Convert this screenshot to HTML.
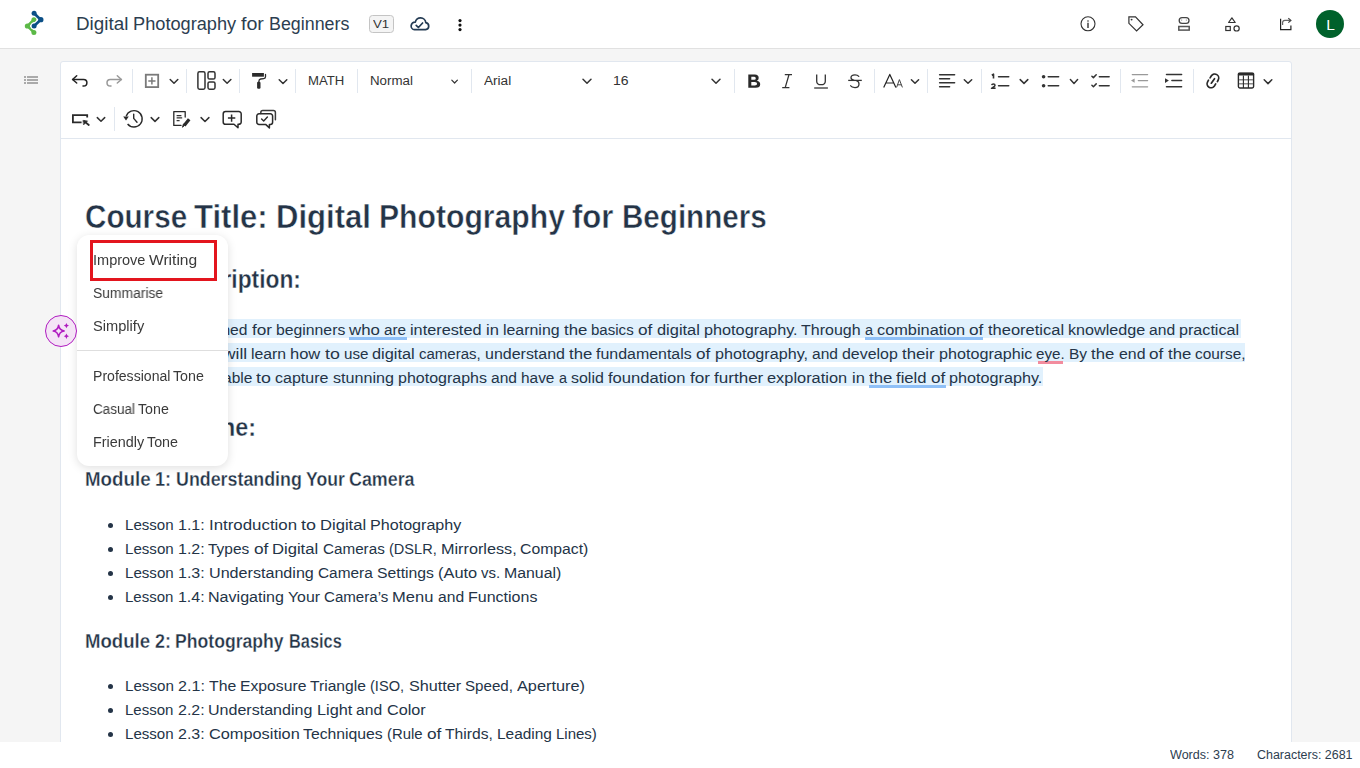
<!DOCTYPE html>
<html><head><meta charset="utf-8">
<style>
html,body{margin:0;padding:0;}
body{width:1360px;height:768px;overflow:hidden;position:relative;background:#f5f5f5;font-family:"Liberation Sans",sans-serif;}
.tx{position:absolute;white-space:pre;transform-origin:0 0;z-index:6;}
.abs{position:absolute;}
#hdr{position:absolute;left:0;top:0;width:1360px;height:48px;background:#fff;border-bottom:1px solid #e1e1e1;}
#editor{position:absolute;left:60px;top:61px;width:1230px;height:700px;background:#fff;border:1px solid #e1e7ef;border-radius:3px 3px 0 0;}
#tbsep{position:absolute;left:61px;top:138px;width:1230px;height:1px;background:#e1e7ef;}
.sep{position:absolute;width:1px;background:#e1e7ef;}
#status{position:absolute;left:0;top:742px;width:1360px;height:26px;background:#fff;}
.hl{position:absolute;background:#e1f1fd;}
.ul{position:absolute;height:3px;background:#8fc0f7;}
#popup{position:absolute;left:77px;top:235px;width:151px;height:231px;background:#fff;border-radius:12px;box-shadow:0 2px 10px rgba(0,0,0,0.13);z-index:20;}
svg{position:absolute;overflow:visible;}
</style></head><body>
<div id="hdr"></div>
<div id="editor"></div>
<div id="tbsep"></div>
<div id="status"></div>

<!-- separators toolbar row 1 -->
<div class="sep" style="left:132px;top:69px;height:24px"></div>
<div class="sep" style="left:186px;top:69px;height:24px"></div>
<div class="sep" style="left:239px;top:69px;height:24px"></div>
<div class="sep" style="left:295px;top:69px;height:24px"></div>
<div class="sep" style="left:357px;top:69px;height:24px"></div>
<div class="sep" style="left:471px;top:69px;height:24px"></div>
<div class="sep" style="left:734px;top:69px;height:24px"></div>
<div class="sep" style="left:874px;top:69px;height:24px"></div>
<div class="sep" style="left:927px;top:69px;height:24px"></div>
<div class="sep" style="left:981px;top:69px;height:24px"></div>
<div class="sep" style="left:1120px;top:69px;height:24px"></div>
<div class="sep" style="left:1193px;top:69px;height:24px"></div>
<!-- row 2 -->
<div class="sep" style="left:114px;top:107px;height:24px"></div>

<!-- highlights -->
<div class="hl" style="left:86px;top:319px;width:1155px;height:19px"></div>
<div class="hl" style="left:86px;top:343px;width:1159px;height:19px"></div>
<div class="hl" style="left:86px;top:367px;width:957px;height:19px"></div>
<div class="ul" style="left:349px;top:337px;width:58px"></div>
<div class="ul" style="left:865px;top:337px;width:118px"></div>
<div class="ul" style="left:869px;top:385px;width:77px"></div>
<div class="ul" style="left:1038px;top:361px;width:25px;background:#f28c9e"></div>

<!-- bullets -->
<div class="abs" style="left:108px;top:523px;width:5px;height:5px;border-radius:50%;background:#243447"></div>
<div class="abs" style="left:108px;top:547px;width:5px;height:5px;border-radius:50%;background:#243447"></div>
<div class="abs" style="left:108px;top:571px;width:5px;height:5px;border-radius:50%;background:#243447"></div>
<div class="abs" style="left:108px;top:595px;width:5px;height:5px;border-radius:50%;background:#243447"></div>
<div class="abs" style="left:108px;top:684px;width:5px;height:5px;border-radius:50%;background:#243447"></div>
<div class="abs" style="left:108px;top:708px;width:5px;height:5px;border-radius:50%;background:#243447"></div>
<div class="abs" style="left:108px;top:732px;width:5px;height:5px;border-radius:50%;background:#243447"></div>

<!-- popup -->
<div id="popup"></div>
<div class="abs" style="left:77px;top:350px;width:151px;height:1px;background:#dedede;z-index:25"></div>
<div class="abs" style="left:90px;top:240px;width:121px;height:35px;border:3px solid #e3151e;z-index:26"></div>

<!-- magic button -->
<div class="abs" style="left:45px;top:315px;width:30px;height:30px;border-radius:50%;border:1.3px solid #b01cc0;background:#f4e4f6;z-index:22"></div>

<svg width="1360" height="768" viewBox="0 0 1360 768" style="left:0;top:0;z-index:5">
<!-- logo -->
<g>
  <polyline points="33.9,19.7 27.6,26 33.9,32.4" fill="none" stroke="#5cb947" stroke-width="2.6" stroke-linejoin="round"/>
  <circle cx="33.9" cy="19.7" r="2.5" fill="#5cb947"/>
  <circle cx="27.4" cy="26" r="2.6" fill="#5cb947"/>
  <circle cx="33.9" cy="32.4" r="2.5" fill="#5cb947"/>
  <line x1="40.7" y1="19.7" x2="34.1" y2="26" stroke="#fff" stroke-width="5"/>
  <circle cx="34.1" cy="26" r="3.6" fill="#fff"/>
  <polyline points="34.1,13.3 40.7,19.7 34.1,26" fill="none" stroke="#0b4f86" stroke-width="2.6" stroke-linejoin="round"/>
  <circle cx="34.1" cy="13.3" r="2.5" fill="#0b4f86"/>
  <circle cx="40.9" cy="19.7" r="2.6" fill="#0b4f86"/>
  <circle cx="34.1" cy="26" r="2.5" fill="#0b4f86"/>
</g>
<!-- V1 badge -->
<rect x="369.5" y="15.5" width="24" height="17" rx="3" fill="#f4f4f4" stroke="#c4c4c4" stroke-width="1"/>
<!-- cloud check -->
<path d="M414.5,29.7 H425.6 A3.6,3.6 0 0 0 425.8,22.6 A5.3,5.3 0 0 0 415.3,22.2 A3.7,3.7 0 0 0 414.5,29.7 Z" fill="none" stroke="#243b53" stroke-width="1.7" stroke-linejoin="round"/>
<polyline points="416.2,25.3 418.4,27.5 422.6,23" fill="none" stroke="#243b53" stroke-width="1.7" stroke-linecap="round" stroke-linejoin="round"/>
<!-- kebab -->
<circle cx="460" cy="20.6" r="1.6" fill="#111"/>
<circle cx="460" cy="25.1" r="1.6" fill="#111"/>
<circle cx="460" cy="29.6" r="1.6" fill="#111"/>
<!-- info -->
<circle cx="1088" cy="23.8" r="7" fill="none" stroke="#333" stroke-width="1.1"/>
<circle cx="1088" cy="21" r="0.8" fill="#333"/>
<line x1="1088" y1="22.8" x2="1088" y2="27.9" stroke="#333" stroke-width="1.4"/>
<!-- tag -->
<path d="M1128.9,16.8 H1135.5 L1143,24.8 L1136.6,31 L1128.9,23.3 Z" fill="none" stroke="#333" stroke-width="1.2" stroke-linejoin="miter"/>
<circle cx="1131.6" cy="19.6" r="0.95" fill="#333"/>
<!-- robot -->
<rect x="1179.2" y="17.6" width="9.8" height="5.8" rx="2.9" fill="none" stroke="#444" stroke-width="1.3"/>
<path d="M1181,20.1 h1.2 M1185.8,20.1 h1.2" stroke="#777" stroke-width="0.8"/>
<rect x="1178.8" y="26.5" width="10.4" height="3.6" fill="none" stroke="#555" stroke-width="1.5"/>
<!-- shapes -->
<path d="M1231.9,17.8 L1235.2,22.5 H1228.6 Z" fill="none" stroke="#333" stroke-width="1.2" stroke-linejoin="round"/>
<rect x="1225.8" y="26.5" width="4.5" height="4" fill="none" stroke="#333" stroke-width="1.2"/>
<circle cx="1236.6" cy="28.4" r="2.6" fill="none" stroke="#333" stroke-width="1.2"/>
<!-- share -->
<path d="M1280.6,18.8 V29.6 H1290.9 V25.5" fill="none" stroke="#222" stroke-width="1.2"/>
<path d="M1282.6,25 V22.6 A2.3,2.3 0 0 1 1284.9,20.3 H1290.6" fill="none" stroke="#666" stroke-width="1.2"/>
<polyline points="1288.3,18.2 1290.9,20.4 1288.3,22.6" fill="none" stroke="#444" stroke-width="1.2"/>
<!-- avatar -->
<circle cx="1330" cy="24" r="14" fill="#00612b"/>

<!-- sidebar list -->
<g fill="#aaa">
<rect x="24" y="76" width="2" height="2"/><rect x="27" y="76" width="11" height="2"/>
<rect x="24" y="79" width="2" height="2"/><rect x="27" y="79" width="11" height="2"/>
<rect x="24" y="82" width="2" height="2"/><rect x="27" y="82" width="11" height="2"/>
</g>

<!-- ===== toolbar row 1 ===== -->
<g fill="none" stroke-linecap="round" stroke-linejoin="round">
<!-- undo -->
<path d="M72.6,79.5 H83.6 A3.3,3.3 0 0 1 83.6,86.1 H83" stroke="#222" stroke-width="1.5"/>
<polyline points="76.7,75.8 72.6,79.5 76.7,83" stroke="#222" stroke-width="1.5"/>
<!-- redo -->
<path d="M121.4,79.5 H110.3 A3.3,3.3 0 0 0 110.3,86.1 H111" stroke="#999" stroke-width="1.5"/>
<polyline points="117.3,75.8 121.4,79.5 117.3,83" stroke="#999" stroke-width="1.5"/>
<!-- insert box -->
<rect x="145.8" y="74.7" width="12.4" height="12.4" stroke="#7a7a7a" stroke-width="1.8" stroke-linejoin="miter"/>
<path d="M148.3,80.9 H155.5 M151.9,77.3 V84.5" stroke="#7a7a7a" stroke-width="1.5" stroke-linecap="butt"/>
<!-- layout -->
<rect x="197.9" y="71.8" width="7.1" height="17.4" rx="1.6" stroke="#333" stroke-width="1.5"/>
<rect x="208" y="71.8" width="7" height="7.2" rx="1.6" stroke="#333" stroke-width="1.5"/>
<rect x="208" y="82" width="7" height="7.2" rx="1.6" stroke="#333" stroke-width="1.5"/>
<!-- roller -->
<rect x="252.1" y="73" width="11.8" height="3.7" fill="#2b2b2b" stroke="none"/>
<path d="M265.5,74.4 V76.8 Q265.5,78.4 263.8,78.6 L260.6,79 Q258.9,79.3 258.9,81.2 V82" stroke="#2b2b2b" stroke-width="1.3"/>
<rect x="257.1" y="81.8" width="3.4" height="6.9" rx="1.2" fill="#2b2b2b" stroke="none"/>
<!-- B I U S -->
<path d="M748.3,74.5 H754.9 Q758.7,74.5 758.7,78 Q758.7,80 756.9,80.8 Q760.2,81.6 760.2,84.3 Q760.2,87.8 755.7,87.8 H748.3 Z M751.3,76.8 V79.8 H754.3 Q755.8,79.8 755.8,78.3 Q755.8,76.8 754.3,76.8 Z M751.3,82.1 V85.5 H754.8 Q757.1,85.5 757.1,83.8 Q757.1,82.1 754.8,82.1 Z" fill="#2a2a2a" stroke="none" fill-rule="evenodd"/>
<path d="M784.8,74.6 H792 M782.2,87.6 H789.4 M789,74.6 L785.2,87.6" stroke="#333" stroke-width="1.3" stroke-linecap="butt"/>
<path d="M816.7,74.4 V81.2 Q816.7,84.7 821,84.7 Q825.3,84.7 825.3,81.2 V74.4" stroke="#333" stroke-width="1.3" stroke-linecap="butt"/>
<path d="M814.2,88 H827.9" stroke="#333" stroke-width="1.3" stroke-linecap="butt"/>
<path d="M858.8,76.3 Q857.6,74.9 855,74.9 Q851,74.9 851,77.8 Q851,79.6 854,80.3" stroke="#333" stroke-width="1.3"/>
<path d="M856.5,80.6 Q859,81.5 859,84 Q859,87.6 855,87.6 Q851.6,87.6 850.6,85.8" stroke="#333" stroke-width="1.3"/>
<path d="M848.2,80.4 H861.8" stroke="#333" stroke-width="1.3" stroke-linecap="butt"/>
<!-- AA -->
<path d="M883.7,87.4 L889.8,74.4 L895.9,87.4 M885.9,83 H893.7" stroke="#222" stroke-width="1.2" stroke-linecap="butt"/>
<path d="M896.6,87.4 L899.4,79.6 L902.4,87.4 M897.6,84.8 H901.3" stroke="#444" stroke-width="1" stroke-linecap="butt"/>
<!-- align -->
<path d="M939.6,74.8 H954.6 M939.6,78.8 H949.6 M939.6,82.7 H954.6 M939.6,86.7 H949.6" stroke="#333" stroke-width="1.5"/>
<!-- numbered list -->
<path d="M998.6,76.8 H1008.7 M998.6,85.7 H1008.7" stroke="#333" stroke-width="1.6"/>
<path d="M991.8,75.2 L993.5,74.2 V78.6" stroke="#333" stroke-width="1.6" stroke-linecap="butt"/>
<path d="M991.7,85.2 Q991.9,83.9 993.4,83.9 Q995,83.9 995,85.2 Q995,86.1 993.6,87 L991.5,88.3 H995.6" stroke="#333" stroke-width="1.5" stroke-linecap="butt"/>
<!-- bullet list -->
<circle cx="1043.6" cy="76.8" r="1.8" fill="#333" stroke="none"/>
<circle cx="1043.6" cy="85.7" r="1.8" fill="#333" stroke="none"/>
<path d="M1048.3,76.8 H1058.6 M1048.3,85.7 H1058.6" stroke="#333" stroke-width="1.6"/>
<!-- check list -->
<path d="M1091.9,76.2 L1093.4,77.6 L1096.2,74.8 M1091.9,85.3 L1093.4,86.7 L1096.2,83.9" stroke="#333" stroke-width="1.5"/>
<path d="M1099.4,76.8 H1109.1 M1099.4,85.7 H1109.1" stroke="#333" stroke-width="1.6"/>
<!-- outdent -->
<path d="M1132.3,74.6 H1147.6 M1138.3,80.6 H1147.6 M1132.3,86.8 H1147.6" stroke="#999" stroke-width="1.3"/>
<path d="M1131,80.6 L1134.6,78.5 V82.7 Z" fill="#999" stroke="none"/>
<!-- indent -->
<path d="M1166.5,74.6 H1181.6 M1171.9,80.6 H1181.6 M1166.5,86.8 H1181.6" stroke="#333" stroke-width="1.5"/>
<path d="M1168.9,80.6 L1165,78.3 V82.9 Z" fill="#333" stroke="none"/>
<!-- link -->
<path d="M1210.1,77.9 L1211.4,75.8 A4,4 0 0 1 1218.2,80.0 L1217.4,81.6" stroke="#2a2a2a" stroke-width="1.7"/>
<path d="M1215.7,83.9 L1214.4,86.0 A4,4 0 0 1 1207.6,81.8 L1208.5,80.2" stroke="#2a2a2a" stroke-width="1.7"/>
<path d="M1211.3,83.2 L1214.5,78.7" stroke="#2a2a2a" stroke-width="1.7"/>
<!-- table -->
<rect x="1238.4" y="73.3" width="15.2" height="14.7" rx="1.4" stroke="#2a2a2a" stroke-width="1.4"/>
<rect x="1237.8" y="72.7" width="16.4" height="2.9" rx="1" fill="#2a2a2a" stroke="none"/>
<path d="M1239,79.8 H1253 M1239,83.8 H1253" stroke="#8a8a8a" stroke-width="1.5" stroke-linecap="butt"/>
<path d="M1243.4,75.5 V88 M1248.4,75.5 V88" stroke="#2a2a2a" stroke-width="1.1" stroke-linecap="butt"/>
<!-- chevrons row1 -->
<g stroke="#333" stroke-width="1.5">
<polyline points="170.2,79.5 174,83.3 177.8,79.5"/>
<polyline points="223.3,79.5 227.1,83.3 230.9,79.5"/>
<polyline points="279.2,79.7 283,83.5 286.8,79.7"/>
<polyline points="451.8,80.2 454.6,83 457.4,80.2" stroke-width="1.2"/>
<polyline points="583,79.2 587,83.2 591,79.2"/>
<polyline points="712,79.2 716,83.2 720,79.2"/>
<polyline points="911.4,79.7 915,83.3 918.6,79.7"/>
<polyline points="964.3,79.7 968,83.3 971.7,79.7"/>
<polyline points="1020.2,79.6 1024,83.4 1027.8,79.6"/>
<polyline points="1070.4,79.6 1074,83.4 1077.6,79.6"/>
<polyline points="1264.2,79.8 1268,83.6 1271.8,79.8"/>
</g>

<!-- ===== toolbar row 2 ===== -->
<!-- select -->
<path d="M81.6,122.4 H72.9 V115.1 H87.2 V117.6" stroke="#2a2a2a" stroke-width="1.8" stroke-linecap="butt" stroke-linejoin="miter"/>
<path d="M84.2,121.3 L88.8,125" stroke="#2a2a2a" stroke-width="1.8"/>
<path d="M83.3,120.4 L87.6,120.9 L83.8,124.7 Z" fill="#2a2a2a" stroke="#2a2a2a" stroke-width="0.6"/>
<!-- history -->
<path d="M126.2,116.2 A8.2,8.2 0 1 1 127.6,124" stroke="#2a2a2a" stroke-width="1.4" stroke-linecap="butt"/>
<path d="M123.2,116.4 L128.8,116.4 L126,120.4 Z" fill="#2a2a2a" stroke="none"/>
<path d="M133.7,114.1 V118.4 L137,122.2" stroke="#2a2a2a" stroke-width="1.4"/>
<!-- doc with pen -->
<path d="M185.2,117 V111.6 H173.8 V125.4 H181" stroke="#2a2a2a" stroke-width="1.3" stroke-linejoin="round"/>
<path d="M176.6,115.5 H181.4 M176.6,117.9 H182.2 M176.6,120.7 H179.6" stroke="#333" stroke-width="1.25" stroke-linecap="butt"/>
<path d="M189.2,119.2 L184.2,125.6" stroke="#2a2a2a" stroke-width="3.2" stroke-linecap="butt"/>
<path d="M185.3,124.2 L182.6,127.3 L183.2,124.6 Z" fill="#2a2a2a" stroke="#2a2a2a" stroke-width="1"/>
<!-- comment add -->
<path d="M225.6,111.5 H238.8 A2.4,2.4 0 0 1 241.2,113.9 V121.9 A2.4,2.4 0 0 1 238.8,124.3 H238 V127.8 L234,124.3 H225.6 A2.4,2.4 0 0 1 223.2,121.9 V113.9 A2.4,2.4 0 0 1 225.6,111.5 Z" stroke="#2a2a2a" stroke-width="1.5"/>
<path d="M227.9,118 H235.3 M231.6,114.4 V121.7" stroke="#2a2a2a" stroke-width="1.5" stroke-linecap="butt"/>
<!-- comment check -->
<path d="M260.8,113.4 V112.6 A2,2 0 0 1 262.8,110.6 H273.4 A2,2 0 0 1 275.4,112.6 V119.8" stroke="#3a3a3a" stroke-width="1.5"/>
<path d="M259,113.8 H270.4 A2.2,2.2 0 0 1 272.6,116 V122.2 A2.2,2.2 0 0 1 270.4,124.4 H269.4 V127.9 L265.6,124.4 H259 A2.2,2.2 0 0 1 256.8,122.2 V116 A2.2,2.2 0 0 1 259,113.8 Z" stroke="#2a2a2a" stroke-width="1.5"/>
<polyline points="261.6,119 263.7,121 267.4,117" stroke="#2a2a2a" stroke-width="1.4"/>
<!-- chevrons row2 -->
<g stroke="#333" stroke-width="1.5">
<polyline points="97.3,117.6 101,121.3 104.7,117.6"/>
<polyline points="151.2,117.6 155,121.4 158.8,117.6"/>
<polyline points="201.1,117.6 205,121.5 208.9,117.6"/>
</g>
</g>
</svg>

<svg width="1360" height="768" viewBox="0 0 1360 768" style="left:0;top:0;z-index:23">
<path d="M58.6,325.2 Q59.3,330.3 64.2,331 Q59.3,331.7 58.6,336.8 Q57.9,331.7 53.2,331 Q57.9,330.3 58.6,325.2 Z" fill="none" stroke="#b01cc0" stroke-width="1.5" stroke-linejoin="round"/>
<path d="M66.4,322.9 Q66.8,325.2 69,325.6 Q66.8,326 66.4,328.3 Q66,326 63.8,325.6 Q66,325.2 66.4,322.9 Z" fill="#b01cc0"/>
<path d="M66.4,333.5 Q66.8,335.8 69,336.2 Q66.8,336.6 66.4,338.9 Q66,336.6 63.8,336.2 Q66,335.8 66.4,333.5 Z" fill="#b01cc0"/>
</svg>
<div class=tx style='left:76.00px;top:15.72px;font-size:17.5px;line-height:17.5px;font-weight:400;color:#2c3e50;transform:scaleX(1.0762)'>Digital</div>
<div class=tx style='left:133.06px;top:15.72px;font-size:17.5px;line-height:17.5px;font-weight:400;color:#2c3e50;transform:scaleX(1.0398)'>Photography</div>
<div class=tx style='left:240.98px;top:15.72px;font-size:17.5px;line-height:17.5px;font-weight:400;color:#2c3e50;transform:scaleX(1.1216)'>for</div>
<div class=tx style='left:268.61px;top:15.72px;font-size:17.5px;line-height:17.5px;font-weight:400;color:#2c3e50;transform:scaleX(1.0200)'>Beginners</div>
<div class=tx style='left:373.00px;top:18.83px;font-size:11.5px;line-height:11.5px;font-weight:400;color:#333;transform:scaleX(1.1507)'>V1</div>
<div class=tx style='left:1326.30px;top:17.43px;font-size:15.5px;line-height:15.5px;font-weight:400;color:#fff;'>L</div>
<div class=tx style='left:308.10px;top:73.86px;font-size:13.7px;line-height:13.7px;font-weight:400;color:#333;transform:scaleX(0.9612)'>MATH</div>
<div class=tx style='left:370.20px;top:73.86px;font-size:13.7px;line-height:13.7px;font-weight:400;color:#333;transform:scaleX(0.9722)'>Normal</div>
<div class=tx style='left:484.00px;top:73.86px;font-size:13.7px;line-height:13.7px;font-weight:400;color:#333;transform:scaleX(0.9930)'>Arial</div>
<div class=tx style='left:613.40px;top:73.86px;font-size:13.7px;line-height:13.7px;font-weight:400;color:#333;transform:scaleX(1.0240)'>16</div>
<div class=tx style='left:85.00px;top:199.30px;font-size:34px;line-height:34px;font-weight:700;color:#243447;-webkit-text-stroke:0.5px #fff;transform:scaleX(0.8717)'>Course</div>
<div class=tx style='left:194.05px;top:199.30px;font-size:34px;line-height:34px;font-weight:700;color:#243447;-webkit-text-stroke:0.5px #fff;transform:scaleX(0.9140)'>Title:</div>
<div class=tx style='left:275.65px;top:199.30px;font-size:34px;line-height:34px;font-weight:700;color:#243447;-webkit-text-stroke:0.5px #fff;transform:scaleX(0.9142)'>Digital</div>
<div class=tx style='left:378.56px;top:199.30px;font-size:34px;line-height:34px;font-weight:700;color:#243447;-webkit-text-stroke:0.5px #fff;transform:scaleX(0.8867)'>Photography</div>
<div class=tx style='left:572.38px;top:199.30px;font-size:34px;line-height:34px;font-weight:700;color:#243447;-webkit-text-stroke:0.5px #fff;transform:scaleX(0.9141)'>for</div>
<div class=tx style='left:621.74px;top:199.30px;font-size:34px;line-height:34px;font-weight:700;color:#243447;-webkit-text-stroke:0.5px #fff;transform:scaleX(0.8701)'>Beginners</div>
<div class=tx style='left:85.00px;top:267.35px;font-size:25px;line-height:25px;font-weight:700;color:#243447;-webkit-text-stroke:0.35px #fff;transform:scaleX(0.8896)'>Course</div>
<div class=tx style='left:167.58px;top:267.35px;font-size:25px;line-height:25px;font-weight:700;color:#243447;-webkit-text-stroke:0.35px #fff;transform:scaleX(0.9113)'>Description:</div>
<div class=tx style='left:84.46px;top:322.03px;font-size:15.5px;line-height:15.5px;font-weight:400;color:#243447;transform:scaleX(1.0003)'>This</div>
<div class=tx style='left:117.91px;top:322.03px;font-size:15.5px;line-height:15.5px;font-weight:400;color:#243447;transform:scaleX(1.0124)'>course</div>
<div class=tx style='left:169.17px;top:322.03px;font-size:15.5px;line-height:15.5px;font-weight:400;color:#243447;transform:scaleX(0.9720)'>is</div>
<div class=tx style='left:184.21px;top:322.03px;font-size:15.5px;line-height:15.5px;font-weight:400;color:#243447;transform:scaleX(1.0088)'>designed</div>
<div class=tx style='left:251.83px;top:322.03px;font-size:15.5px;line-height:15.5px;font-weight:400;color:#243447;transform:scaleX(1.1112)'>for</div>
<div class=tx style='left:276.09px;top:322.03px;font-size:15.5px;line-height:15.5px;font-weight:400;color:#243447;transform:scaleX(1.0174)'>beginners</div>
<div class=tx style='left:349.17px;top:322.03px;font-size:15.5px;line-height:15.5px;font-weight:400;color:#243447;transform:scaleX(1.0860)'>who</div>
<div class=tx style='left:384.21px;top:322.03px;font-size:15.5px;line-height:15.5px;font-weight:400;color:#243447;transform:scaleX(0.9875)'>are</div>
<div class=tx style='left:410.48px;top:322.03px;font-size:15.5px;line-height:15.5px;font-weight:400;color:#243447;transform:scaleX(1.0501)'>interested</div>
<div class=tx style='left:486.12px;top:322.03px;font-size:15.5px;line-height:15.5px;font-weight:400;color:#243447;transform:scaleX(1.0688)'>in</div>
<div class=tx style='left:503.18px;top:322.03px;font-size:15.5px;line-height:15.5px;font-weight:400;color:#243447;transform:scaleX(1.0257)'>learning</div>
<div class=tx style='left:563.91px;top:322.03px;font-size:15.5px;line-height:15.5px;font-weight:400;color:#243447;transform:scaleX(1.0832)'>the</div>
<div class=tx style='left:591.42px;top:322.03px;font-size:15.5px;line-height:15.5px;font-weight:400;color:#243447;transform:scaleX(0.9712)'>basics</div>
<div class=tx style='left:638.24px;top:322.03px;font-size:15.5px;line-height:15.5px;font-weight:400;color:#243447;transform:scaleX(1.1100)'>of</div>
<div class=tx style='left:656.75px;top:322.03px;font-size:15.5px;line-height:15.5px;font-weight:400;color:#243447;transform:scaleX(1.0583)'>digital</div>
<div class=tx style='left:703.76px;top:322.03px;font-size:15.5px;line-height:15.5px;font-weight:400;color:#243447;transform:scaleX(1.0478)'>photography.</div>
<div class=tx style='left:801.04px;top:322.03px;font-size:15.5px;line-height:15.5px;font-weight:400;color:#243447;transform:scaleX(1.0319)'>Through</div>
<div class=tx style='left:864.77px;top:322.03px;font-size:15.5px;line-height:15.5px;font-weight:400;color:#243447;transform:scaleX(0.9313)'>a</div>
<div class=tx style='left:876.95px;top:322.03px;font-size:15.5px;line-height:15.5px;font-weight:400;color:#243447;transform:scaleX(1.0534)'>combination</div>
<div class=tx style='left:969.14px;top:322.03px;font-size:15.5px;line-height:15.5px;font-weight:400;color:#243447;transform:scaleX(1.1100)'>of</div>
<div class=tx style='left:987.66px;top:322.03px;font-size:15.5px;line-height:15.5px;font-weight:400;color:#243447;transform:scaleX(1.0634)'>theoretical</div>
<div class=tx style='left:1067.86px;top:322.03px;font-size:15.5px;line-height:15.5px;font-weight:400;color:#243447;transform:scaleX(1.0413)'>knowledge</div>
<div class=tx style='left:1149.18px;top:322.03px;font-size:15.5px;line-height:15.5px;font-weight:400;color:#243447;transform:scaleX(1.0088)'>and</div>
<div class=tx style='left:1179.43px;top:322.03px;font-size:15.5px;line-height:15.5px;font-weight:400;color:#243447;transform:scaleX(1.0409)'>practical</div>
<div class=tx style='left:86.44px;top:346.03px;font-size:15.5px;line-height:15.5px;font-weight:400;color:#243447;transform:scaleX(0.9698)'>exercises,</div>
<div class=tx style='left:158.24px;top:346.03px;font-size:15.5px;line-height:15.5px;font-weight:400;color:#243447;transform:scaleX(1.0375)'>students</div>
<div class=tx style='left:222.85px;top:346.03px;font-size:15.5px;line-height:15.5px;font-weight:400;color:#243447;transform:scaleX(1.1192)'>will</div>
<div class=tx style='left:251.08px;top:346.03px;font-size:15.5px;line-height:15.5px;font-weight:400;color:#243447;transform:scaleX(1.0190)'>learn</div>
<div class=tx style='left:290.33px;top:346.03px;font-size:15.5px;line-height:15.5px;font-weight:400;color:#243447;transform:scaleX(1.0650)'>how</div>
<div class=tx style='left:324.75px;top:346.03px;font-size:15.5px;line-height:15.5px;font-weight:400;color:#243447;transform:scaleX(1.1486)'>to</div>
<div class=tx style='left:343.74px;top:346.03px;font-size:15.5px;line-height:15.5px;font-weight:400;color:#243447;transform:scaleX(0.9771)'>use</div>
<div class=tx style='left:372.30px;top:346.03px;font-size:15.5px;line-height:15.5px;font-weight:400;color:#243447;transform:scaleX(1.0534)'>digital</div>
<div class=tx style='left:419.10px;top:346.03px;font-size:15.5px;line-height:15.5px;font-weight:400;color:#243447;transform:scaleX(0.9686)'>cameras,</div>
<div class=tx style='left:484.98px;top:346.03px;font-size:15.5px;line-height:15.5px;font-weight:400;color:#243447;transform:scaleX(1.0311)'>understand</div>
<div class=tx style='left:569.08px;top:346.03px;font-size:15.5px;line-height:15.5px;font-weight:400;color:#243447;transform:scaleX(1.0782)'>the</div>
<div class=tx style='left:596.46px;top:346.03px;font-size:15.5px;line-height:15.5px;font-weight:400;color:#243447;transform:scaleX(1.0283)'>fundamentals</div>
<div class=tx style='left:696.29px;top:346.03px;font-size:15.5px;line-height:15.5px;font-weight:400;color:#243447;transform:scaleX(1.1049)'>of</div>
<div class=tx style='left:714.72px;top:346.03px;font-size:15.5px;line-height:15.5px;font-weight:400;color:#243447;transform:scaleX(1.0409)'>photography,</div>
<div class=tx style='left:811.84px;top:346.03px;font-size:15.5px;line-height:15.5px;font-weight:400;color:#243447;transform:scaleX(1.0041)'>and</div>
<div class=tx style='left:841.95px;top:346.03px;font-size:15.5px;line-height:15.5px;font-weight:400;color:#243447;transform:scaleX(1.0282)'>develop</div>
<div class=tx style='left:901.91px;top:346.03px;font-size:15.5px;line-height:15.5px;font-weight:400;color:#243447;transform:scaleX(1.0819)'>their</div>
<div class=tx style='left:938.67px;top:346.03px;font-size:15.5px;line-height:15.5px;font-weight:400;color:#243447;transform:scaleX(1.0422)'>photographic</div>
<div class=tx style='left:1036.21px;top:346.03px;font-size:15.5px;line-height:15.5px;font-weight:400;color:#243447;transform:scaleX(0.9775)'>eye.</div>
<div class=tx style='left:1068.99px;top:346.03px;font-size:15.5px;line-height:15.5px;font-weight:400;color:#243447;transform:scaleX(1.0001)'>By</div>
<div class=tx style='left:1091.22px;top:346.03px;font-size:15.5px;line-height:15.5px;font-weight:400;color:#243447;transform:scaleX(1.0782)'>the</div>
<div class=tx style='left:1118.60px;top:346.03px;font-size:15.5px;line-height:15.5px;font-weight:400;color:#243447;transform:scaleX(1.0236)'>end</div>
<div class=tx style='left:1149.21px;top:346.03px;font-size:15.5px;line-height:15.5px;font-weight:400;color:#243447;transform:scaleX(1.1049)'>of</div>
<div class=tx style='left:1167.64px;top:346.03px;font-size:15.5px;line-height:15.5px;font-weight:400;color:#243447;transform:scaleX(1.0782)'>the</div>
<div class=tx style='left:1195.02px;top:346.03px;font-size:15.5px;line-height:15.5px;font-weight:400;color:#243447;transform:scaleX(0.9942)'>course,</div>
<div class=tx style='left:108.25px;top:369.93px;font-size:15.5px;line-height:15.5px;font-weight:400;color:#243447;transform:scaleX(1.0394)'>students</div>
<div class=tx style='left:172.98px;top:369.93px;font-size:15.5px;line-height:15.5px;font-weight:400;color:#243447;transform:scaleX(1.1212)'>will</div>
<div class=tx style='left:201.26px;top:369.93px;font-size:15.5px;line-height:15.5px;font-weight:400;color:#243447;transform:scaleX(1.0172)'>be</div>
<div class=tx style='left:222.95px;top:369.93px;font-size:15.5px;line-height:15.5px;font-weight:400;color:#243447;transform:scaleX(1.0013)'>able</div>
<div class=tx style='left:256.44px;top:369.93px;font-size:15.5px;line-height:15.5px;font-weight:400;color:#243447;transform:scaleX(1.1508)'>to</div>
<div class=tx style='left:275.46px;top:369.93px;font-size:15.5px;line-height:15.5px;font-weight:400;color:#243447;transform:scaleX(1.0337)'>capture</div>
<div class=tx style='left:333.05px;top:369.93px;font-size:15.5px;line-height:15.5px;font-weight:400;color:#243447;transform:scaleX(1.0402)'>stunning</div>
<div class=tx style='left:398.15px;top:369.93px;font-size:15.5px;line-height:15.5px;font-weight:400;color:#243447;transform:scaleX(1.0324)'>photographs</div>
<div class=tx style='left:491.27px;top:369.93px;font-size:15.5px;line-height:15.5px;font-weight:400;color:#243447;transform:scaleX(1.0060)'>and</div>
<div class=tx style='left:521.44px;top:369.93px;font-size:15.5px;line-height:15.5px;font-weight:400;color:#243447;transform:scaleX(0.9946)'>have</div>
<div class=tx style='left:559.02px;top:369.93px;font-size:15.5px;line-height:15.5px;font-weight:400;color:#243447;transform:scaleX(0.9288)'>a</div>
<div class=tx style='left:571.17px;top:369.93px;font-size:15.5px;line-height:15.5px;font-weight:400;color:#243447;transform:scaleX(1.0289)'>solid</div>
<div class=tx style='left:608.13px;top:369.93px;font-size:15.5px;line-height:15.5px;font-weight:400;color:#243447;transform:scaleX(1.0702)'>foundation</div>
<div class=tx style='left:689.76px;top:369.93px;font-size:15.5px;line-height:15.5px;font-weight:400;color:#243447;transform:scaleX(1.1081)'>for</div>
<div class=tx style='left:713.95px;top:369.93px;font-size:15.5px;line-height:15.5px;font-weight:400;color:#243447;transform:scaleX(1.1003)'>further</div>
<div class=tx style='left:767.39px;top:369.93px;font-size:15.5px;line-height:15.5px;font-weight:400;color:#243447;transform:scaleX(1.0564)'>exploration</div>
<div class=tx style='left:851.64px;top:369.93px;font-size:15.5px;line-height:15.5px;font-weight:400;color:#243447;transform:scaleX(1.0658)'>in</div>
<div class=tx style='left:868.65px;top:369.93px;font-size:15.5px;line-height:15.5px;font-weight:400;color:#243447;transform:scaleX(1.0802)'>the</div>
<div class=tx style='left:896.08px;top:369.93px;font-size:15.5px;line-height:15.5px;font-weight:400;color:#243447;transform:scaleX(1.0747)'>field</div>
<div class=tx style='left:930.78px;top:369.93px;font-size:15.5px;line-height:15.5px;font-weight:400;color:#243447;transform:scaleX(1.1070)'>of</div>
<div class=tx style='left:949.24px;top:369.93px;font-size:15.5px;line-height:15.5px;font-weight:400;color:#243447;transform:scaleX(1.0449)'>photography.</div>
<div class=tx style='left:85.00px;top:415.05px;font-size:25px;line-height:25px;font-weight:700;color:#243447;-webkit-text-stroke:0.35px #fff;transform:scaleX(0.8918)'>Course</div>
<div class=tx style='left:167.79px;top:415.05px;font-size:25px;line-height:25px;font-weight:700;color:#243447;-webkit-text-stroke:0.35px #fff;transform:scaleX(0.9330)'>Outline:</div>
<div class=tx style='left:85.00px;top:469.73px;font-size:19.5px;line-height:19.5px;font-weight:700;color:#243447;-webkit-text-stroke:0.3px #fff;transform:scaleX(0.9610)'>Module</div>
<div class=tx style='left:155.25px;top:469.73px;font-size:19.5px;line-height:19.5px;font-weight:700;color:#243447;-webkit-text-stroke:0.3px #fff;transform:scaleX(0.9269)'>1:</div>
<div class=tx style='left:175.99px;top:469.73px;font-size:19.5px;line-height:19.5px;font-weight:700;color:#243447;-webkit-text-stroke:0.3px #fff;transform:scaleX(0.9147)'>Understanding</div>
<div class=tx style='left:305.74px;top:469.73px;font-size:19.5px;line-height:19.5px;font-weight:700;color:#243447;-webkit-text-stroke:0.3px #fff;transform:scaleX(0.9043)'>Your</div>
<div class=tx style='left:349.28px;top:469.73px;font-size:19.5px;line-height:19.5px;font-weight:700;color:#243447;-webkit-text-stroke:0.3px #fff;transform:scaleX(0.9158)'>Camera</div>
<div class=tx style='left:125.00px;top:517.23px;font-size:15.5px;line-height:15.5px;font-weight:400;color:#243447;transform:scaleX(0.9726)'>Lesson</div>
<div class=tx style='left:177.78px;top:517.23px;font-size:15.5px;line-height:15.5px;font-weight:400;color:#243447;transform:scaleX(1.0331)'>1.1:</div>
<div class=tx style='left:208.66px;top:517.23px;font-size:15.5px;line-height:15.5px;font-weight:400;color:#243447;transform:scaleX(1.0875)'>Introduction</div>
<div class=tx style='left:300.92px;top:517.23px;font-size:15.5px;line-height:15.5px;font-weight:400;color:#243447;transform:scaleX(1.1586)'>to</div>
<div class=tx style='left:320.07px;top:517.23px;font-size:15.5px;line-height:15.5px;font-weight:400;color:#243447;transform:scaleX(1.0708)'>Digital</div>
<div class=tx style='left:370.37px;top:517.23px;font-size:15.5px;line-height:15.5px;font-weight:400;color:#243447;transform:scaleX(1.0390)'>Photography</div>
<div class=tx style='left:125.00px;top:541.23px;font-size:15.5px;line-height:15.5px;font-weight:400;color:#243447;transform:scaleX(0.9737)'>Lesson</div>
<div class=tx style='left:177.84px;top:541.23px;font-size:15.5px;line-height:15.5px;font-weight:400;color:#243447;transform:scaleX(1.0343)'>1.2:</div>
<div class=tx style='left:208.27px;top:541.23px;font-size:15.5px;line-height:15.5px;font-weight:400;color:#243447;transform:scaleX(0.9981)'>Types</div>
<div class=tx style='left:253.72px;top:541.23px;font-size:15.5px;line-height:15.5px;font-weight:400;color:#243447;transform:scaleX(1.1159)'>of</div>
<div class=tx style='left:272.33px;top:541.23px;font-size:15.5px;line-height:15.5px;font-weight:400;color:#243447;transform:scaleX(1.0720)'>Digital</div>
<div class=tx style='left:322.69px;top:541.23px;font-size:15.5px;line-height:15.5px;font-weight:400;color:#243447;transform:scaleX(0.9820)'>Cameras</div>
<div class=tx style='left:388.62px;top:541.23px;font-size:15.5px;line-height:15.5px;font-weight:400;color:#243447;transform:scaleX(0.9389)'>(DSLR,</div>
<div class=tx style='left:440.51px;top:541.23px;font-size:15.5px;line-height:15.5px;font-weight:400;color:#243447;transform:scaleX(1.0458)'>Mirrorless,</div>
<div class=tx style='left:520.34px;top:541.23px;font-size:15.5px;line-height:15.5px;font-weight:400;color:#243447;transform:scaleX(1.0174)'>Compact)</div>
<div class=tx style='left:125.00px;top:565.23px;font-size:15.5px;line-height:15.5px;font-weight:400;color:#243447;transform:scaleX(0.9740)'>Lesson</div>
<div class=tx style='left:177.86px;top:565.23px;font-size:15.5px;line-height:15.5px;font-weight:400;color:#243447;transform:scaleX(1.0346)'>1.3:</div>
<div class=tx style='left:208.78px;top:565.23px;font-size:15.5px;line-height:15.5px;font-weight:400;color:#243447;transform:scaleX(1.0398)'>Understanding</div>
<div class=tx style='left:317.80px;top:565.23px;font-size:15.5px;line-height:15.5px;font-weight:400;color:#243447;transform:scaleX(0.9928)'>Camera</div>
<div class=tx style='left:376.71px;top:565.23px;font-size:15.5px;line-height:15.5px;font-weight:400;color:#243447;transform:scaleX(1.0170)'>Settings</div>
<div class=tx style='left:437.85px;top:565.23px;font-size:15.5px;line-height:15.5px;font-weight:400;color:#243447;transform:scaleX(1.0575)'>(Auto</div>
<div class=tx style='left:480.82px;top:565.23px;font-size:15.5px;line-height:15.5px;font-weight:400;color:#243447;transform:scaleX(0.9643)'>vs.</div>
<div class=tx style='left:504.10px;top:565.23px;font-size:15.5px;line-height:15.5px;font-weight:400;color:#243447;transform:scaleX(1.0232)'>Manual)</div>
<div class=tx style='left:125.00px;top:589.23px;font-size:15.5px;line-height:15.5px;font-weight:400;color:#243447;transform:scaleX(0.9689)'>Lesson</div>
<div class=tx style='left:177.58px;top:589.23px;font-size:15.5px;line-height:15.5px;font-weight:400;color:#243447;transform:scaleX(1.0292)'>1.4:</div>
<div class=tx style='left:208.35px;top:589.23px;font-size:15.5px;line-height:15.5px;font-weight:400;color:#243447;transform:scaleX(1.0363)'>Navigating</div>
<div class=tx style='left:287.78px;top:589.23px;font-size:15.5px;line-height:15.5px;font-weight:400;color:#243447;transform:scaleX(1.0229)'>Your</div>
<div class=tx style='left:323.98px;top:589.23px;font-size:15.5px;line-height:15.5px;font-weight:400;color:#243447;transform:scaleX(0.9735)'>Camera’s</div>
<div class=tx style='left:392.42px;top:589.23px;font-size:15.5px;line-height:15.5px;font-weight:400;color:#243447;transform:scaleX(1.0656)'>Menu</div>
<div class=tx style='left:437.90px;top:589.23px;font-size:15.5px;line-height:15.5px;font-weight:400;color:#243447;transform:scaleX(1.0090)'>and</div>
<div class=tx style='left:468.16px;top:589.23px;font-size:15.5px;line-height:15.5px;font-weight:400;color:#243447;transform:scaleX(1.0333)'>Functions</div>
<div class=tx style='left:85.00px;top:631.62px;font-size:19.5px;line-height:19.5px;font-weight:700;color:#243447;-webkit-text-stroke:0.3px #fff;transform:scaleX(0.9536)'>Module</div>
<div class=tx style='left:154.71px;top:631.62px;font-size:19.5px;line-height:19.5px;font-weight:700;color:#243447;-webkit-text-stroke:0.3px #fff;transform:scaleX(0.9198)'>2:</div>
<div class=tx style='left:175.30px;top:631.62px;font-size:19.5px;line-height:19.5px;font-weight:700;color:#243447;-webkit-text-stroke:0.3px #fff;transform:scaleX(0.9037)'>Photography</div>
<div class=tx style='left:288.59px;top:631.62px;font-size:19.5px;line-height:19.5px;font-weight:700;color:#243447;-webkit-text-stroke:0.3px #fff;transform:scaleX(0.8397)'>Basics</div>
<div class=tx style='left:125.00px;top:678.23px;font-size:15.5px;line-height:15.5px;font-weight:400;color:#243447;transform:scaleX(0.9785)'>Lesson</div>
<div class=tx style='left:178.10px;top:678.23px;font-size:15.5px;line-height:15.5px;font-weight:400;color:#243447;transform:scaleX(1.0394)'>2.1:</div>
<div class=tx style='left:208.68px;top:678.23px;font-size:15.5px;line-height:15.5px;font-weight:400;color:#243447;transform:scaleX(1.0197)'>The</div>
<div class=tx style='left:240.12px;top:678.23px;font-size:15.5px;line-height:15.5px;font-weight:400;color:#243447;transform:scaleX(1.0135)'>Exposure</div>
<div class=tx style='left:310.18px;top:678.23px;font-size:15.5px;line-height:15.5px;font-weight:400;color:#243447;transform:scaleX(1.0082)'>Triangle</div>
<div class=tx style='left:370.27px;top:678.23px;font-size:15.5px;line-height:15.5px;font-weight:400;color:#243447;transform:scaleX(0.9436)'>(ISO,</div>
<div class=tx style='left:408.59px;top:678.23px;font-size:15.5px;line-height:15.5px;font-weight:400;color:#243447;transform:scaleX(1.0455)'>Shutter</div>
<div class=tx style='left:465.05px;top:678.23px;font-size:15.5px;line-height:15.5px;font-weight:400;color:#243447;transform:scaleX(0.9752)'>Speed,</div>
<div class=tx style='left:516.60px;top:678.23px;font-size:15.5px;line-height:15.5px;font-weight:400;color:#243447;transform:scaleX(1.0506)'>Aperture)</div>
<div class=tx style='left:125.00px;top:702.23px;font-size:15.5px;line-height:15.5px;font-weight:400;color:#243447;transform:scaleX(0.9696)'>Lesson</div>
<div class=tx style='left:177.62px;top:702.23px;font-size:15.5px;line-height:15.5px;font-weight:400;color:#243447;transform:scaleX(1.0300)'>2.2:</div>
<div class=tx style='left:208.41px;top:702.23px;font-size:15.5px;line-height:15.5px;font-weight:400;color:#243447;transform:scaleX(1.0352)'>Understanding</div>
<div class=tx style='left:316.94px;top:702.23px;font-size:15.5px;line-height:15.5px;font-weight:400;color:#243447;transform:scaleX(1.0505)'>Light</div>
<div class=tx style='left:356.41px;top:702.23px;font-size:15.5px;line-height:15.5px;font-weight:400;color:#243447;transform:scaleX(1.0098)'>and</div>
<div class=tx style='left:386.70px;top:702.23px;font-size:15.5px;line-height:15.5px;font-weight:400;color:#243447;transform:scaleX(1.0447)'>Color</div>
<div class=tx style='left:125.00px;top:726.23px;font-size:15.5px;line-height:15.5px;font-weight:400;color:#243447;transform:scaleX(0.9730)'>Lesson</div>
<div class=tx style='left:177.81px;top:726.23px;font-size:15.5px;line-height:15.5px;font-weight:400;color:#243447;transform:scaleX(1.0336)'>2.3:</div>
<div class=tx style='left:208.70px;top:726.23px;font-size:15.5px;line-height:15.5px;font-weight:400;color:#243447;transform:scaleX(1.0532)'>Composition</div>
<div class=tx style='left:303.12px;top:726.23px;font-size:15.5px;line-height:15.5px;font-weight:400;color:#243447;transform:scaleX(1.0162)'>Techniques</div>
<div class=tx style='left:386.99px;top:726.23px;font-size:15.5px;line-height:15.5px;font-weight:400;color:#243447;transform:scaleX(0.9620)'>(Rule</div>
<div class=tx style='left:426.79px;top:726.23px;font-size:15.5px;line-height:15.5px;font-weight:400;color:#243447;transform:scaleX(1.1151)'>of</div>
<div class=tx style='left:444.90px;top:726.23px;font-size:15.5px;line-height:15.5px;font-weight:400;color:#243447;transform:scaleX(1.0092)'>Thirds,</div>
<div class=tx style='left:496.88px;top:726.23px;font-size:15.5px;line-height:15.5px;font-weight:400;color:#243447;transform:scaleX(0.9948)'>Leading</div>
<div class=tx style='left:555.93px;top:726.23px;font-size:15.5px;line-height:15.5px;font-weight:400;color:#243447;transform:scaleX(0.9680)'>Lines)</div>
<div class=tx style='left:92.50px;top:252.90px;font-size:14px;line-height:14px;font-weight:400;color:#3a3a3a;z-index:30;will-change:transform;transform:scaleX(1.0370)'>Improve</div>
<div class=tx style='left:148.51px;top:252.90px;font-size:14px;line-height:14px;font-weight:400;color:#3a3a3a;z-index:30;will-change:transform;transform:scaleX(1.1125)'>Writing</div>
<div class=tx style='left:92.50px;top:286.40px;font-size:14px;line-height:14px;font-weight:400;color:#3a3a3a;z-index:30;will-change:transform;transform:scaleX(0.9902)'>Summarise</div>
<div class=tx style='left:92.50px;top:319.40px;font-size:14px;line-height:14px;font-weight:400;color:#3a3a3a;z-index:30;will-change:transform;transform:scaleX(1.0446)'>Simplify</div>
<div class=tx style='left:92.50px;top:369.10px;font-size:14px;line-height:14px;font-weight:400;color:#3a3a3a;z-index:30;will-change:transform;transform:scaleX(1.0047)'>Professional</div>
<div class=tx style='left:173.21px;top:369.10px;font-size:14px;line-height:14px;font-weight:400;color:#3a3a3a;z-index:30;will-change:transform;transform:scaleX(1.0175)'>Tone</div>
<div class=tx style='left:92.50px;top:402.40px;font-size:14px;line-height:14px;font-weight:400;color:#3a3a3a;z-index:30;will-change:transform;transform:scaleX(0.9618)'>Casual</div>
<div class=tx style='left:137.71px;top:402.40px;font-size:14px;line-height:14px;font-weight:400;color:#3a3a3a;z-index:30;will-change:transform;transform:scaleX(1.0140)'>Tone</div>
<div class=tx style='left:92.50px;top:435.00px;font-size:14px;line-height:14px;font-weight:400;color:#3a3a3a;z-index:30;will-change:transform;transform:scaleX(1.0276)'>Friendly</div>
<div class=tx style='left:146.98px;top:435.00px;font-size:14px;line-height:14px;font-weight:400;color:#3a3a3a;z-index:30;will-change:transform;transform:scaleX(1.0217)'>Tone</div>
<div class=tx style='left:1170.20px;top:749.20px;font-size:12px;line-height:12px;font-weight:400;color:#2d3d4f;transform:scaleX(1.0465)'>Words: 378</div>
<div class=tx style='left:1256.90px;top:749.20px;font-size:12px;line-height:12px;font-weight:400;color:#2d3d4f;transform:scaleX(1.0373)'>Characters: 2681</div>

</body></html>
